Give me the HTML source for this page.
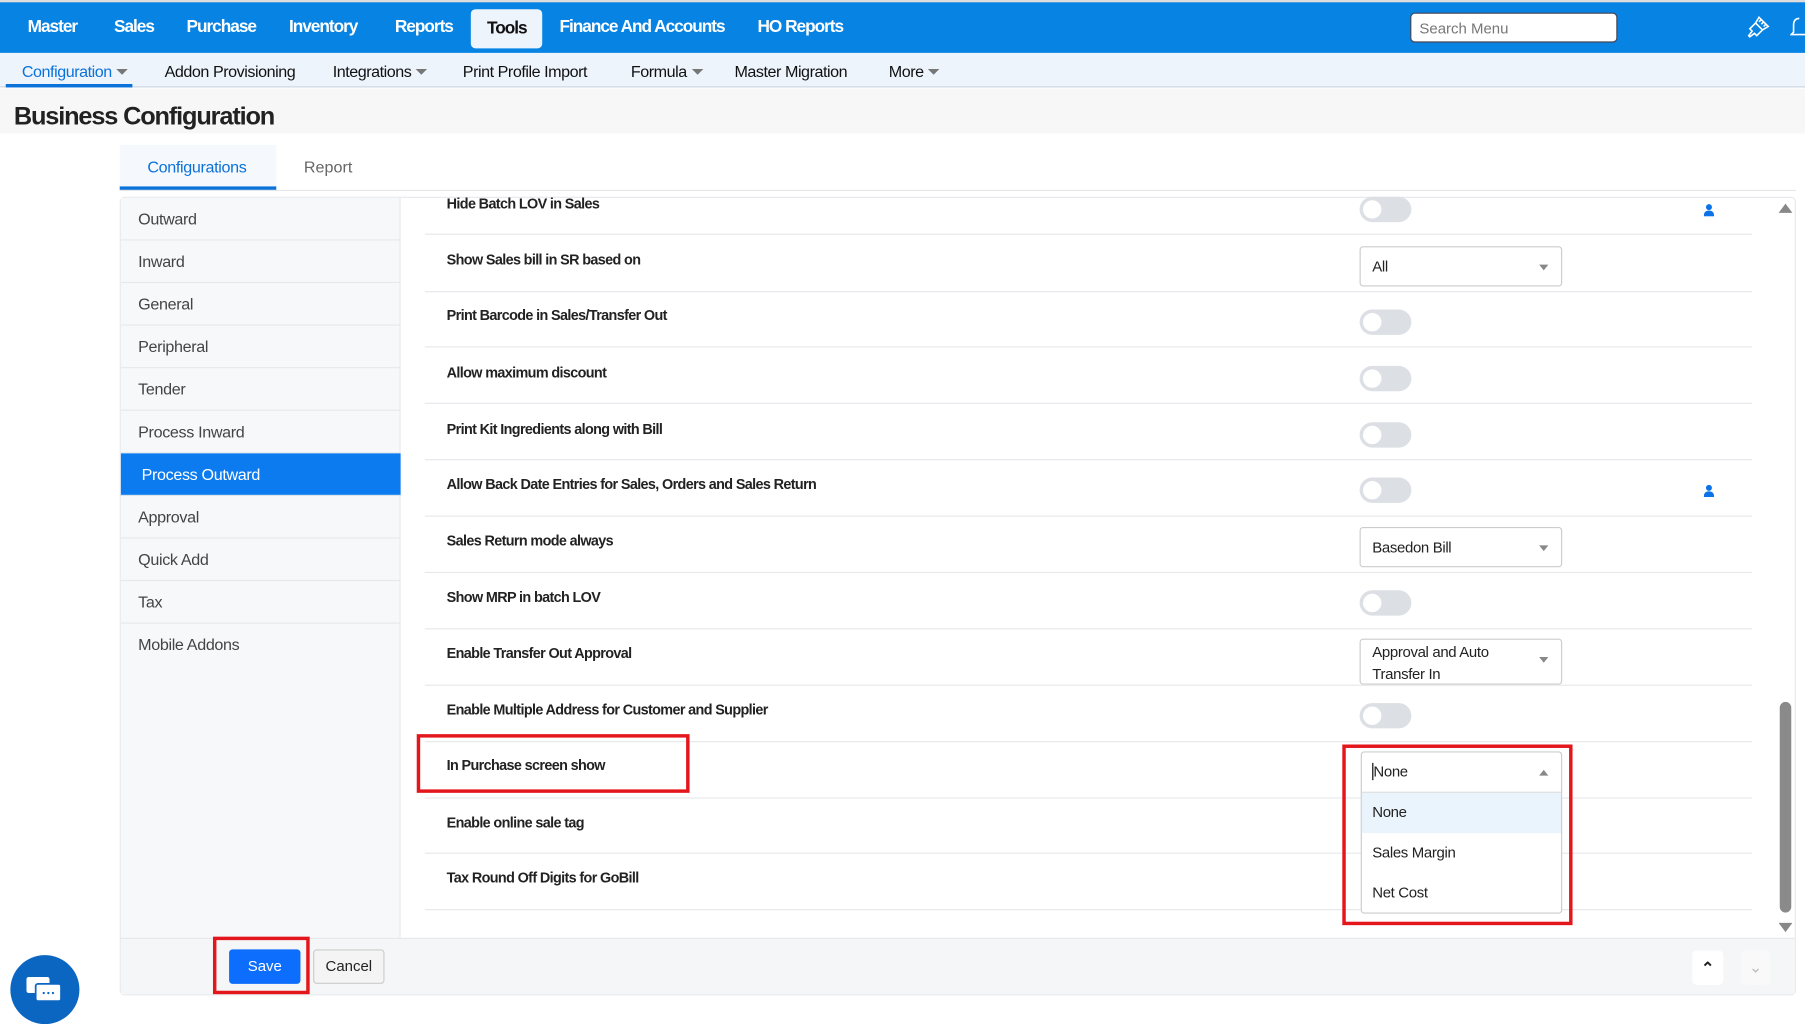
<!DOCTYPE html>
<html><head><meta charset="utf-8"><style>
*{box-sizing:border-box;margin:0;padding:0}
html,body{width:1805px;height:1008px;overflow:hidden;background:#fff}
#s{position:absolute;left:0;top:0;width:1568px;height:876px;transform:scale(1.1512,1.1507);transform-origin:0 0;font-family:"Liberation Sans",sans-serif;color:#222}
.a{position:absolute}
.top{left:0;top:0;width:1568px;height:46px;background:#0683e3;border-top:2px solid #ddd}
.mi{top:15px;color:#fff;font-weight:bold;font-size:15px;letter-spacing:-0.9px}
.sub{left:0;top:46px;width:1568px;height:30px;background:#edf4fc;border-bottom:1px solid #cdd6e0}
.si{top:54px;font-size:14px;color:#111;letter-spacing:-0.4px}
.car{display:inline-block;width:0;height:0;border-left:5px solid transparent;border-right:5px solid transparent;border-top:5px solid #777;margin-left:4px;vertical-align:2px}
.side{font-size:14px;color:#444;left:105px;width:243px;height:37px;line-height:37px;padding-left:15px;border-bottom:1px solid #e6e8eb;letter-spacing:-0.3px}
.lbl{left:388px;font-size:12.5px;font-weight:bold;color:#222;letter-spacing:-0.55px}
.sep{left:369px;width:1153px;height:1px;background:#e6e8eb}
.tg{left:1181px;width:45px;height:22px;border-radius:11px;background:#dcdfe3}
.tg:after{content:"";position:absolute;left:3px;top:3px;width:16px;height:16px;border-radius:50%;background:#fff}
.sel{left:1181px;width:176px;height:35px;border:1px solid #ccc;border-radius:3px;background:#fff;font-size:13px;padding-left:10px;line-height:33px;letter-spacing:-0.3px}
.sel:after{content:"";position:absolute;right:11px;top:15px;border-left:4px solid transparent;border-right:4px solid transparent;border-top:5px solid #888}
.pi{left:1480px;width:9px;height:11px}
.red{border:3px solid #e3161c}
</style></head><body><div id="s">
<div class="a top"></div>
<div class="a mi" style="left:24px">Master</div>
<div class="a mi" style="left:99px">Sales</div>
<div class="a mi" style="left:162px">Purchase</div>
<div class="a mi" style="left:251px">Inventory</div>
<div class="a mi" style="left:343px">Reports</div>
<div class="a" style="left:409px;top:8px;width:62px;height:34px;background:#eef4fb;border-radius:4px"></div>
<div class="a mi" style="left:423px;top:16px;color:#111">Tools</div>
<div class="a mi" style="left:486px">Finance And Accounts</div>
<div class="a mi" style="left:658px">HO Reports</div>
<div class="a" style="left:1225px;top:11px;width:180px;height:26px;background:#fff;border:1px solid #445;border-radius:4px;font-size:13px;color:#777;padding:5px 7px">Search Menu</div>
<svg class="a" style="left:1515px;top:12px" width="24" height="24" viewBox="0 0 24 24" fill="none" stroke="#fff" stroke-width="1.4"><path d="M13 3l8 8-5 3-6-6z M10 8l-5 5 2 2-3 4 1 1 4-3 2 2 5-5"/><path d="M15 5l-2 2M17 7l-2 2M19 9l-2 2"/></svg>
<svg class="a" style="left:1555px;top:12px" width="14" height="24" viewBox="0 0 14 24" fill="none" stroke="#fff" stroke-width="1.4"><path d="M8 4c-4 0-5 3-5 6v6l-2 2h13"/></svg>
<div class="a sub"></div>
<div class="a si" style="left:19px;color:#0b72d9">Configuration<span class="car"></span></div>
<div class="a" style="left:5px;top:73px;width:110px;height:3px;background:#0b72d9"></div>
<div class="a si" style="left:143px">Addon Provisioning</div>
<div class="a si" style="left:289px">Integrations<span class="car"></span></div>
<div class="a si" style="left:402px">Print Profile Import</div>
<div class="a si" style="left:548px">Formula<span class="car"></span></div>
<div class="a si" style="left:638px">Master Migration</div>
<div class="a si" style="left:772px">More<span class="car"></span></div>
<div class="a" style="left:0;top:77px;width:1568px;height:39px;background:#f7f7f7"></div>
<div class="a" style="left:12px;top:88px;font-size:22px;font-weight:bold;letter-spacing:-1px;color:#222">Business Configuration</div>
<div class="a" style="left:104px;top:126px;width:136px;height:39px;background:#f5f8fc;border-bottom:3px solid #0b72d9"></div>
<div class="a" style="left:128px;top:137px;font-size:14px;color:#0b72d9;letter-spacing:-0.3px">Configurations</div>
<div class="a" style="left:264px;top:137px;font-size:14px;color:#666">Report</div>
<div class="a" style="left:104px;top:165px;width:1456px;height:1px;background:#e4e6e9"></div>
<div class="a" style="left:104px;top:171px;width:1456px;height:694px;border:1px solid #e6e8eb;border-radius:4px"></div>
<div class="a" style="left:105px;top:172px;width:243px;height:643px;background:#f7f8fa;border-right:1px solid #e6e8eb"></div>
<div class="a side" style="top:172px">Outward</div>
<div class="a side" style="top:209px">Inward</div>
<div class="a side" style="top:246px">General</div>
<div class="a side" style="top:283px">Peripheral</div>
<div class="a side" style="top:320px">Tender</div>
<div class="a side" style="top:357px">Process Inward</div>
<div class="a side" style="top:394px;background:#0b7bef;color:#fff;padding-left:18px">Process Outward</div>
<div class="a side" style="top:431px">Approval</div>
<div class="a side" style="top:468px">Quick Add</div>
<div class="a side" style="top:505px">Tax</div>
<div class="a side" style="top:542px;border:none">Mobile Addons</div>

<div class="a lbl" style="top:170px">Hide Batch LOV in Sales</div>
<div class="a tg" style="top:171px"></div>
<div class="a sep" style="top:203px"></div>
<div class="a lbl" style="top:219px">Show Sales bill in SR based on</div>
<div class="a sel" style="top:214px">All</div>
<div class="a sep" style="top:253px"></div>
<div class="a lbl" style="top:267px">Print Barcode in Sales/Transfer Out</div>
<div class="a tg" style="top:269px"></div>
<div class="a sep" style="top:301px"></div>
<div class="a lbl" style="top:317px">Allow maximum discount</div>
<div class="a tg" style="top:318px"></div>
<div class="a sep" style="top:350px"></div>
<div class="a lbl" style="top:366px">Print Kit Ingredients along with Bill</div>
<div class="a tg" style="top:367px"></div>
<div class="a sep" style="top:399px"></div>
<div class="a lbl" style="top:414px">Allow Back Date Entries for Sales, Orders and Sales Return</div>
<div class="a tg" style="top:415px"></div>
<div class="a sep" style="top:448px"></div>
<div class="a lbl" style="top:463px">Sales Return mode always</div>
<div class="a sel" style="top:458px">Basedon Bill</div>
<div class="a sep" style="top:497px"></div>
<div class="a lbl" style="top:512px">Show MRP in batch LOV</div>
<div class="a tg" style="top:513px"></div>
<div class="a sep" style="top:546px"></div>
<div class="a lbl" style="top:561px">Enable Transfer Out Approval</div>
<div class="a sel" style="top:555px;height:40px;line-height:19px;padding-top:1px">Approval and Auto<br>Transfer In</div>
<div class="a sep" style="top:595px"></div>
<div class="a lbl" style="top:610px">Enable Multiple Address for Customer and Supplier</div>
<div class="a tg" style="top:611px"></div>
<div class="a sep" style="top:644px"></div>
<div class="a lbl" style="top:658px">In Purchase screen show</div>
<div class="a red" style="left:362px;top:638px;width:237px;height:51px"></div>
<div class="a sep" style="top:693px"></div>
<div class="a lbl" style="top:708px">Enable online sale tag</div>
<div class="a sep" style="top:741px"></div>
<div class="a lbl" style="top:756px">Tax Round Off Digits for GoBill</div>
<div class="a sep" style="top:790px"></div>

<div class="a" style="left:1182px;top:653px;width:175px;height:141px;border:1px solid #ccc;border-radius:3px;background:#fff;font-size:13px;color:#222;letter-spacing:-0.3px">
<div style="height:35px;line-height:34px;padding-left:9px;border-bottom:1px solid #ddd;position:relative"><span style="border-left:1px solid #000"></span>None<span style="position:absolute;right:11px;top:15px;border-left:4px solid transparent;border-right:4px solid transparent;border-bottom:5px solid #888"></span></div>
<div style="height:35px;line-height:34px;padding-left:9px;background:#e9f4fd">None</div>
<div style="height:35px;line-height:34px;padding-left:9px">Sales Margin</div>
<div style="height:35px;line-height:34px;padding-left:9px">Net Cost</div>
</div>
<div class="a red" style="left:1166px;top:647px;width:200px;height:157px"></div>

<svg class="a pi" style="top:177px" viewBox="0 0 9 11"><circle cx="4.5" cy="3" r="2.6" fill="#0b72e8"/><path d="M0 11c0-4 2-5 4.5-5S9 7 9 11z" fill="#0b72e8"/></svg>
<svg class="a pi" style="top:421px" viewBox="0 0 9 11"><circle cx="4.5" cy="3" r="2.6" fill="#0b72e8"/><path d="M0 11c0-4 2-5 4.5-5S9 7 9 11z" fill="#0b72e8"/></svg>

<div class="a" style="left:1545px;top:177px;border-left:6px solid transparent;border-right:6px solid transparent;border-bottom:8px solid #888"></div>
<div class="a" style="left:1546px;top:610px;width:10px;height:183px;background:#8a8a8a;border-radius:5px"></div>
<div class="a" style="left:1545px;top:802px;border-left:6px solid transparent;border-right:6px solid transparent;border-top:8px solid #888"></div>

<div class="a" style="left:105px;top:815px;width:1454px;height:49px;background:#f5f6f8;border-top:1px solid #e6e8eb"></div>
<div class="a" style="left:199px;top:825px;width:62px;height:30px;background:#0d6efd;border-radius:3px;color:#fff;font-size:13px;text-align:center;line-height:30px">Save</div>
<div class="a red" style="left:185px;top:814px;width:84px;height:50px"></div>
<div class="a" style="left:272px;top:825px;width:62px;height:30px;background:#f4f4f4;border:1px solid #ccc;border-radius:3px;color:#222;font-size:13px;text-align:center;line-height:28px">Cancel</div>
<div class="a" style="left:1470px;top:826px;width:27px;height:30px;background:#fff;border-radius:4px;text-align:center;font-size:14px;line-height:30px;color:#222;font-weight:bold">&#8963;</div>
<div class="a" style="left:1512px;top:826px;width:26px;height:30px;background:#f9f9f9;border-radius:4px;text-align:center;font-size:14px;line-height:28px;color:#bbb">&#8964;</div>
<div class="a" style="left:9px;top:830px;width:60px;height:60px;border-radius:50%;background:#0b66c2"></div>
<svg class="a" style="left:22px;top:848px" width="34" height="26" viewBox="0 0 34 26"><rect x="1" y="1" width="20" height="14" rx="2" fill="#fff"/><rect x="9" y="7" width="22" height="15" rx="2" fill="#fff" stroke="#0b66c2" stroke-width="1.5"/><circle cx="16" cy="15" r="1" fill="#0b66c2"/><circle cx="20" cy="15" r="1" fill="#0b66c2"/><circle cx="24" cy="15" r="1" fill="#0b66c2"/></svg>
</div></body></html>
